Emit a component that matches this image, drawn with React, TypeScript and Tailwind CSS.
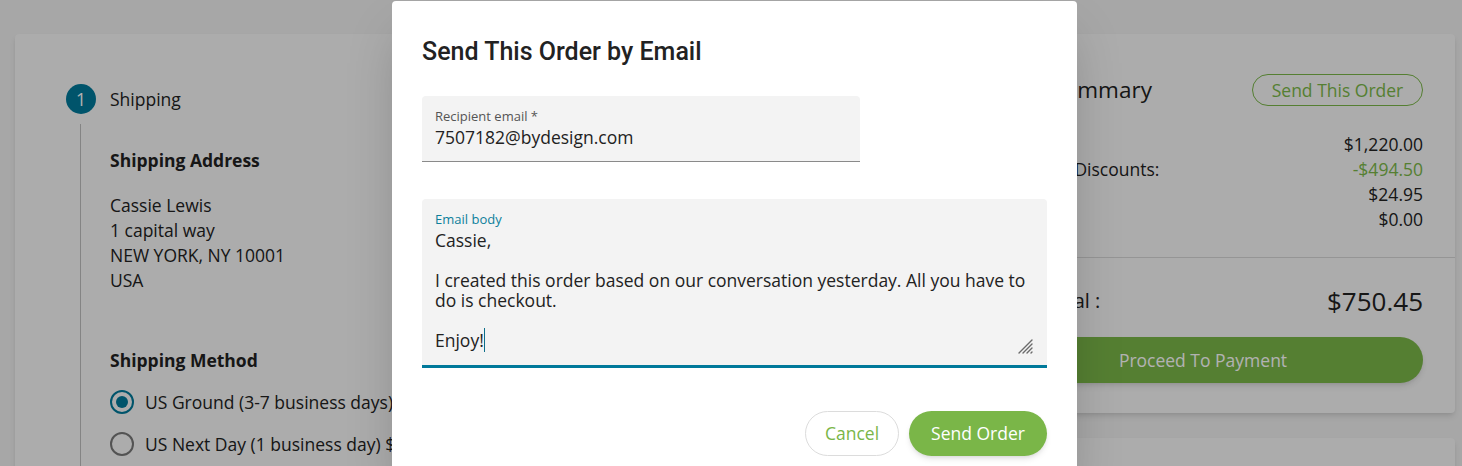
import { useState } from "react";

const summaryRows = [
  { label: "Subtotal:", value: "$1,220.00" },
  { label: "Promotion Discounts:", value: "-$494.50", green: true },
  { label: "Shipping:", value: "$24.95" },
  { label: "Tax:", value: "$0.00" },
];

const shippingMethods = [
  { id: "ground", label: "US Ground (3-7 business days) $24.95" },
  { id: "nextday", label: "US Next Day (1 business day) $45.00" },
];

const emailLines = [
  "Cassie,",
  "",
  "I created this order based on our conversation yesterday. All you have to do is checkout.",
  "",
];

function ResizeHandle() {
  return (
    <svg width="18" height="18" viewBox="0 0 18 18">
      <g stroke="#6b6b6b" strokeWidth="1.4" strokeLinecap="round">
        <line x1="3" y1="16" x2="16" y2="3" />
        <line x1="7" y1="16" x2="16" y2="7" />
        <line x1="11" y1="16" x2="16" y2="11" />
        <line x1="15" y1="16" x2="16" y2="15" />
      </g>
    </svg>
  );
}

const App = () => {
  const [method, setMethod] = useState("ground");

  return (
    <div className="relative h-[466px] w-full overflow-hidden bg-[#efefef] font-['Open_Sans',sans-serif] text-[#222]">
      {/* checkout page behind the dialog */}
      <div className="flex gap-[25px] pl-[15px] pr-[7px] pt-[34px]">
        <div className="flex-1 h-[520px] rounded bg-[#f6f6f6] shadow-md pl-[51px] pt-[50px]">
          <div className="flex items-center gap-[14px]">
            <div className="flex h-[30px] w-[30px] items-center justify-center rounded-full bg-[#00799a] text-[17.5px] text-white">
              1
            </div>
            <span className="text-[17.5px]">Shipping</span>
          </div>
          <div className="ml-[14px] mt-[10px] border-l border-[#bdbdbd] pl-[29px] pt-[24px] pb-10">
            <h3 className="text-[17.5px] font-bold leading-[25px]">Shipping Address</h3>
            <div className="mt-[20px] text-[17.5px] leading-[25px]">
              <div>Cassie Lewis</div>
              <div>1 capital way</div>
              <div>NEW YORK, NY 10001</div>
              <div>USA</div>
            </div>
            <h3 className="mt-[55px] text-[17.5px] font-bold leading-[25px]">Shipping Method</h3>
            <div className="mt-[17px] flex flex-col gap-[18px]">
              {shippingMethods.map((m) => (
                <label
                  key={m.id}
                  className="flex items-center gap-[11px] text-[17.5px] leading-[24px]"
                  onClick={() => setMethod(m.id)}
                >
                  <span
                    className={
                      method === m.id
                        ? "flex h-[24px] w-[24px] items-center justify-center rounded-full border-2 border-[#00799a]"
                        : "flex h-[24px] w-[24px] items-center justify-center rounded-full border-2 border-[#777]"
                    }
                  >
                    {method === m.id && <span className="h-[12px] w-[12px] rounded-full bg-[#00799a]" />}
                  </span>
                  {m.label}
                </label>
              ))}
            </div>
          </div>
        </div>

        <div className="flex w-[504px] flex-col gap-[25px]">
          <div className="h-[379px] rounded bg-[#f6f6f6] shadow-md pt-[40px]">
            <div className="flex items-center justify-between px-[32px]">
              <h2 className="text-[22.5px] leading-[32px]">Order Summary</h2>
              <button className="h-[32px] w-[171px] rounded-full border border-[#7ab648] text-[17.5px] text-[#7ab648]">
                Send This Order
              </button>
            </div>
            <div className="mt-[26px] px-[32px] pb-[25px] text-[17.5px] leading-[25px]">
              {summaryRows.map((r) => (
                <div key={r.label} className="flex justify-between">
                  <span>{r.label}</span>
                  <span className={r.green ? "text-[#7ab648]" : ""}>{r.value}</span>
                </div>
              ))}
            </div>
            <div className="border-t border-[#d6d6d6] px-[32px] pt-[26px]">
              <div className="flex h-[34px] items-center justify-between">
                <span className="text-[20px]">Order Total :</span>
                <span className="text-[26px]">$750.45</span>
              </div>
              <button className="mt-[19px] h-[46px] w-full rounded-full bg-[#7ab648] text-[17.5px] text-white shadow-md">
                Proceed To Payment
              </button>
            </div>
          </div>
          <div className="h-[200px] rounded bg-[#f6f6f6] shadow-md" />
        </div>
      </div>

      {/* overlay */}
      <div className="absolute inset-0 bg-black/30" />

      {/* dialog */}
      <div className="absolute left-[392px] top-[1px] w-[685px] rounded-t bg-white px-[30px] pt-[37px] pb-[30px] shadow-2xl">
        <h2 className="font-['Roboto',sans-serif] text-[25px] font-medium leading-[28px] text-[#222]">
          Send This Order by Email
        </h2>

        <div className="mt-[30px] flex h-[66px] w-[438px] flex-col rounded-t bg-[#f3f3f3] border-b border-[#8a8a8a] px-[13px] pt-[11px]">
          <span className="text-[13px] leading-[18px] text-[#555]">Recipient email *</span>
          <span className="text-[17.5px] leading-[24px] text-[#222]">7507182@bydesign.com</span>
        </div>

        <div className="relative mt-[37px] h-[169px] rounded-t bg-[#f3f3f3] border-b-[3px] border-[#00799a] px-[13px] pt-[12px]">
          <div className="text-[13px] leading-[17px] text-[#0d7f9b]">Email body</div>
          <div className="pt-[2px] text-[17.5px] leading-[20px] text-[#222]">
            {emailLines.map((line, i) => (
              <div key={i} className="min-h-[20px]">
                {line}
              </div>
            ))}
            <div>
              <span className="border-r border-[#0d6f8a]">Enjoy!</span>
            </div>
          </div>
          <div className="absolute right-[13px] bottom-[10px]">
            <ResizeHandle />
          </div>
        </div>

        <div className="mt-[43px] flex justify-end gap-[10px]">
          <button className="h-[45px] w-[94px] rounded-full border border-[#dcdcdc] bg-white text-[17.5px] text-[#7ab648]">
            Cancel
          </button>
          <button className="h-[45px] w-[138px] rounded-full bg-[#7ab648] px-[20px] text-[17.5px] text-white shadow-md">
            Send Order
          </button>
        </div>
      </div>
    </div>
  );
};

export default App;
